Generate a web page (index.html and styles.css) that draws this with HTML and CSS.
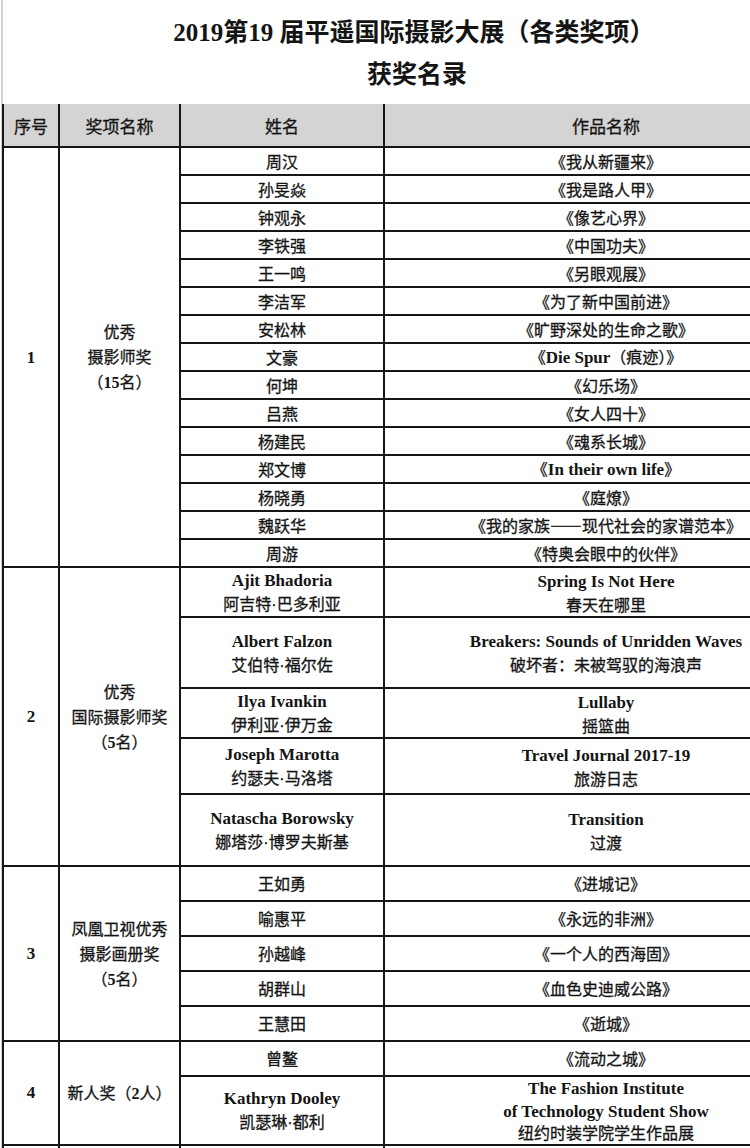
FILE: index.html
```html
<!DOCTYPE html>
<html lang="zh-CN">
<head>
<meta charset="utf-8">
<title>2019第19届平遥国际摄影大展获奖名录</title>
<link rel="stylesheet" href="styles.css">
</head>
<body>
<div class="page">
  <header class="title">
    <h1 class="title-line main">2019第19 届平遥国际摄影大展（各类奖项）</h1>
    <h2 class="title-line sub">获奖名录</h2>
  </header>
  <table class="list">
    <colgroup>
      <col class="c-no"><col class="c-award"><col class="c-name"><col class="c-work">
    </colgroup>
    <thead>
      <tr class="head"><th>序号</th><th>奖项名称</th><th>姓名</th><th>作品名称</th></tr>
    </thead>
    <tbody>
      <tr class="r28"><td class="no" rowspan="15">1</td><td class="award" rowspan="15">优秀<br>摄影师奖<br>（<span class="num">15</span>名）</td><td>周汉</td><td>《我从新疆来》</td></tr>
      <tr class="r28"><td>孙旻焱</td><td>《我是路人甲》</td></tr>
      <tr class="r28"><td>钟观永</td><td>《像艺心界》</td></tr>
      <tr class="r28"><td>李铁强</td><td>《中国功夫》</td></tr>
      <tr class="r28"><td>王一鸣</td><td>《另眼观展》</td></tr>
      <tr class="r28"><td>李洁军</td><td>《为了新中国前进》</td></tr>
      <tr class="r28"><td>安松林</td><td>《旷野深处的生命之歌》</td></tr>
      <tr class="r28"><td>文豪</td><td>《<span class="en">Die Spur</span>（痕迹）》</td></tr>
      <tr class="r28"><td>何坤</td><td>《幻乐场》</td></tr>
      <tr class="r28"><td>吕燕</td><td>《女人四十》</td></tr>
      <tr class="r28"><td>杨建民</td><td>《魂系长城》</td></tr>
      <tr class="r28"><td>郑文博</td><td>《<span class="en">In their own life</span>》</td></tr>
      <tr class="r28"><td>杨晓勇</td><td>《庭燎》</td></tr>
      <tr class="r28"><td>魏跃华</td><td>《我的家族——现代社会的家谱范本》</td></tr>
      <tr class="r28"><td>周游</td><td>《特奥会眼中的伙伴》</td></tr>

      <tr class="r48 two"><td class="no" rowspan="5">2</td><td class="award" rowspan="5">优秀<br>国际摄影师奖<br>（<span class="num">5</span>名）</td><td><span class="en">Ajit Bhadoria</span><br>阿吉特<span class="dot">·</span>巴多利亚</td><td><span class="en">Spring Is Not Here</span><br>春天在哪里</td></tr>
      <tr class="r71 two"><td><span class="en">Albert Falzon</span><br>艾伯特<span class="dot">·</span>福尔佐</td><td><span class="en">Breakers: Sounds of Unridden Waves</span><br>破坏者：未被驾驭的海浪声</td></tr>
      <tr class="r50 two"><td><span class="en">Ilya Ivankin</span><br>伊利亚<span class="dot">·</span>伊万金</td><td><span class="en">Lullaby</span><br>摇篮曲</td></tr>
      <tr class="r56 two"><td><span class="en">Joseph Marotta</span><br>约瑟夫<span class="dot">·</span>马洛塔</td><td><span class="en">Travel Journal 2017-19</span><br>旅游日志</td></tr>
      <tr class="r72 two"><td><span class="en">Natascha Borowsky</span><br>娜塔莎<span class="dot">·</span>博罗夫斯基</td><td><span class="en">Transition</span><br>过渡</td></tr>

      <tr class="r35"><td class="no" rowspan="5">3</td><td class="award" rowspan="5">凤凰卫视优秀<br>摄影画册奖<br>（<span class="num">5</span>名）</td><td>王如勇</td><td>《进城记》</td></tr>
      <tr class="r35"><td>喻惠平</td><td>《永远的非洲》</td></tr>
      <tr class="r35"><td>孙越峰</td><td>《一个人的西海固》</td></tr>
      <tr class="r35"><td>胡群山</td><td>《血色史迪威公路》</td></tr>
      <tr class="r35"><td>王慧田</td><td>《逝城》</td></tr>

      <tr class="r35"><td class="no" rowspan="2">4</td><td class="award" rowspan="2">新人奖（<span class="num">2</span>人）</td><td>曾鳌</td><td>《流动之城》</td></tr>
      <tr class="r68 two"><td><span class="en">Kathryn Dooley</span><br>凯瑟琳<span class="dot">·</span>都利</td><td class="three"><span class="en">The Fashion Institute<br>of Technology Student Show</span><br>纽约时装学院学生作品展</td></tr>
      <tr class="r35"><td class="no"></td><td class="award"></td><td></td><td></td></tr>
    </tbody>
  </table>
</div>
</body>
</html>
```

FILE: styles.css
```css
html, body {
  margin: 0;
  padding: 0;
  overflow: hidden;
  background: #ffffff;
}

body {
  width: 750px;
  height: 1148px;
  color: #141414;
  font-family: "Noto Sans CJK SC", "Noto Sans", sans-serif;
}

.page {
  width: 830px;
  margin-left: 1px;
  border-left: 2px solid #d2d2d2;
}

.title {
  width: 812px;
  height: 104px;
  box-sizing: border-box;
  padding-top: 15px;
  text-align: center;
}

.title-line {
  margin: 0;
  font-family: "Liberation Serif", "Noto Sans CJK SC", serif;
  font-weight: 700;
  font-size: 25px;
  line-height: 36px;
  color: #141414;
}

.title-line.main {
  padding-left: 10px;
}

.title-line.sub {
  margin-top: 3px;
  padding-left: 16px;
  font-family: "Noto Sans CJK SC", sans-serif;
}

.list {
  border-collapse: collapse;
  table-layout: fixed;
  width: 825px;
  margin-left: -1px;
}

.c-no { width: 56px; }
.c-award { width: 121px; }
.c-name { width: 204px; }
.c-work { width: 444px; }

.list th,
.list td {
  border: 2px solid #161616;
  padding: 0;
  text-align: center;
  vertical-align: middle;
  font-size: 16px;
  font-weight: 400;
  line-height: 25px;
  color: #141414;
  -webkit-text-stroke: 0.3px #141414;
}

.list th {
  background: #d4d4d4;
  border-top-style: hidden;
  font-size: 17px;
  height: 42px;
}

.head { height: 43px; }

.list td.no {
  font-family: "Liberation Serif", serif;
  font-weight: 700;
  font-size: 17px;
  -webkit-text-stroke: 0;
}

.num {
  font-family: "Liberation Serif", serif;
  font-weight: 700;
  -webkit-text-stroke: 0;
}

.en {
  font-family: "Liberation Serif", serif;
  font-weight: 700;
  font-size: 17px;
  -webkit-text-stroke: 0;
}

.dot {
  font-family: "Liberation Sans", sans-serif;
  font-weight: 400;
}

.list .two td { line-height: 23px; }
.list .two td.award { line-height: 25px; }
.list .two td.three { line-height: 21.5px; }

.r28 { height: 28px; }
.r35 { height: 35px; }
.r48 { height: 48px; }
.r50 { height: 50px; }
.r56 { height: 56px; }
.r68 { height: 68px; }
.r71 { height: 71px; }
.r72 { height: 72px; }
```
